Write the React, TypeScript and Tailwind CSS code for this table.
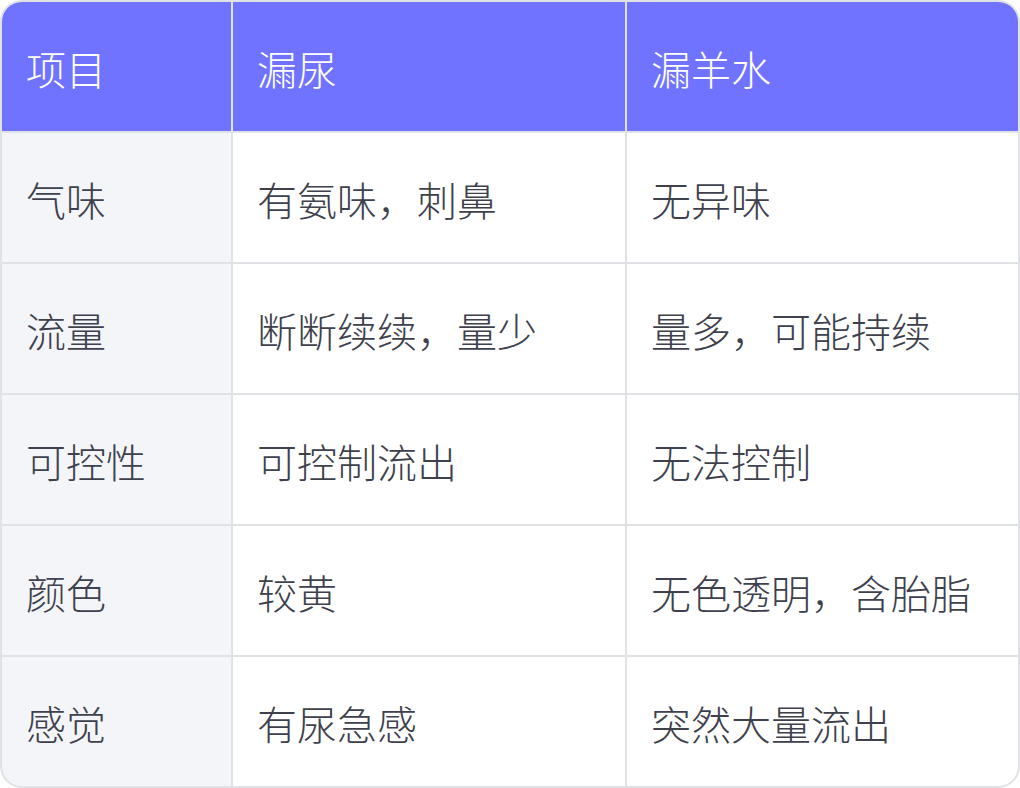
import React from "react";

const rows = [
  ["气味", "有氨味，刺鼻", "无异味"],
  ["流量", "断断续续，量少", "量多，可能持续"],
  ["可控性", "可控制流出", "无法控制"],
  ["颜色", "较黄", "无色透明，含胎脂"],
  ["感觉", "有尿急感", "突然大量流出"],
];

export default function App() {
  return (
    <div
      className="w-[1020px] h-[788px] bg-[#e1e2e6] p-[2px] rounded-[22px] overflow-hidden font-light"
      style={{ fontFamily: '"Noto Sans CJK SC", "Noto Sans", sans-serif' }}
    >
      <div className="grid grid-cols-[229px_392px_391px] grid-rows-[repeat(6,129px)] gap-[2px] h-full rounded-[20px] overflow-hidden">
        {/* header */}
        <div className="bg-[#6f73ff] text-white text-[40px] flex items-center px-6 pt-[2px]">项目</div>
        <div className="bg-[#6f73ff] text-white text-[40px] flex items-center px-6 pt-[2px]">漏尿</div>
        <div className="bg-[#6f73ff] text-white text-[40px] flex items-center px-6 pt-[2px]">漏羊水</div>

        {rows.map((r, i) => (
          <React.Fragment key={i}>
            <div className="bg-[#f4f5f9] text-[#3e414d] text-[40px] flex items-center px-6 pt-[2px]">
              {r[0]}
            </div>
            <div className="bg-white text-[#3e414d] text-[40px] flex items-center px-6 pt-[2px]">
              {r[1]}
            </div>
            <div className="bg-white text-[#3e414d] text-[40px] flex items-center px-6 pt-[2px]">
              {r[2]}
            </div>
          </React.Fragment>
        ))}
      </div>
    </div>
  );
}
